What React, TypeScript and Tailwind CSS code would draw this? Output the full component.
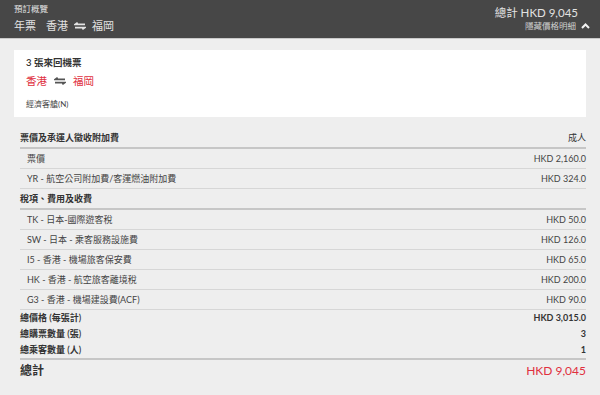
import React from "react";

const font = { fontFamily: 'Lato, "Noto Sans CJK TC", "Noto Sans", sans-serif' };

function SwapIcon({ color }: { color: string }) {
  return (
    <svg width="12" height="8" viewBox="0 0 12 8" fill="none" stroke={color} strokeWidth="1.6">
      <path d="M11 2.4H1.2L3.6 0.6" />
      <path d="M1 5.6H10.8L8.4 7.4" />
    </svg>
  );
}

type Row = { label: string; value: string };

const fareRows: Row[] = [
  { label: "票價", value: "HKD 2,160.0" },
  { label: "YR - 航空公司附加費/客運燃油附加費", value: "HKD 324.0" },
];

const taxRows: Row[] = [
  { label: "TK - 日本-國際遊客稅", value: "HKD 50.0" },
  { label: "SW - 日本 - 乘客服務設施費", value: "HKD 126.0" },
  { label: "I5 - 香港 - 機場旅客保安費", value: "HKD 65.0" },
  { label: "HK - 香港 - 航空旅客離境稅", value: "HKD 200.0" },
  { label: "G3 - 香港 - 機場建設費(ACF)", value: "HKD 90.0" },
];

const summaryRows: Row[] = [
  { label: "總價格 (每張計)", value: "HKD 3,015.0" },
  { label: "總購票數量 (張)", value: "3" },
  { label: "總乘客數量 (人)", value: "1" },
];

function SectionHeader({ label, right }: { label: string; right?: string }) {
  return (
    <div className="flex h-[21px] items-center justify-between border-b-2 border-[#c6c6c6] text-[9px] font-bold text-[#333]">
      <span>{label}</span>
      {right && <span className="font-normal">{right}</span>}
    </div>
  );
}

function ItemRow({ row }: { row: Row }) {
  return (
    <div className="flex h-[20px] items-center justify-between border-b border-[#d6d6d6] pl-[7px] text-[9px] text-[#444]">
      <span>{row.label}</span>
      <span>{row.value}</span>
    </div>
  );
}

export default function App() {
  return (
    <div className="min-h-[395px] w-[600px] bg-[#eeeeee]" style={font}>
      {/* header bar */}
      <div className="flex h-[39px] items-start justify-between border-b border-[#c9c9c9] bg-[#474747] pl-[14px] pr-[10px] pt-[3px] text-[#e2e2e2]">
        <div>
          <div className="text-[8.5px] leading-[12px]">預訂概覽</div>
          <div className="mt-[4px] flex items-center text-[11px] leading-[14px]">
            <span>年票</span>
            <span className="ml-[10px]">香港</span>
            <span className="mx-[6px]">
              <SwapIcon color="#e2e2e2" />
            </span>
            <span>福岡</span>
          </div>
        </div>
        <div className="flex flex-col items-end">
          <div className="mr-[12px] mt-[2px] text-[11.5px] leading-[15px]">總計 HKD 9,045</div>
          <div className="flex items-center text-[8.5px] leading-[12px] text-[#cfcfcf]">
            <span>隱藏價格明細</span>
            <svg className="ml-[5px]" width="9" height="6" viewBox="0 0 9 6" fill="none" stroke="#f2f2f2" strokeWidth="2">
              <path d="M1 5L4.5 1.5L8 5" />
            </svg>
          </div>
        </div>
      </div>

      {/* ticket card */}
      <div className="mx-[14px] mt-[11px] h-[67px] bg-white pl-[12px] pt-[6px]">
        <div className="text-[9.5px] font-semibold leading-[13px] text-[#333]">3 張來回機票</div>
        <div className="mt-[5px] flex items-center text-[10.5px] leading-[14px] text-[#e0303e]">
          <span>香港</span>
          <span className="mx-[7px]">
            <SwapIcon color="#555555" />
          </span>
          <span>福岡</span>
        </div>
        <div className="mt-[11px] text-[8px] leading-[11px] text-[#444]">經濟客艙(N)</div>
      </div>

      {/* price table */}
      <div className="ml-[20px] mr-[14px] mt-[11px]">
        <SectionHeader label="票價及承運人徵收附加費" right="成人" />
        {fareRows.map((r) => (
          <ItemRow key={r.label} row={r} />
        ))}
        <SectionHeader label="稅項、費用及收費" />
        {taxRows.map((r) => (
          <ItemRow key={r.label} row={r} />
        ))}
        <div className="border-b-2 border-[#c6c6c6]">
          {summaryRows.map((r) => (
            <div key={r.label} className="flex h-[16px] items-center justify-between text-[9px] font-semibold text-[#333]">
              <span>{r.label}</span>
              <span className="font-bold">{r.value}</span>
            </div>
          ))}
        </div>
        <div className="flex h-[22px] items-center justify-between">
          <span className="text-[12px] font-semibold text-[#333]">總計</span>
          <span className="text-[12px] text-[#e0303e]">HKD 9,045</span>
        </div>
      </div>
    </div>
  );
}
